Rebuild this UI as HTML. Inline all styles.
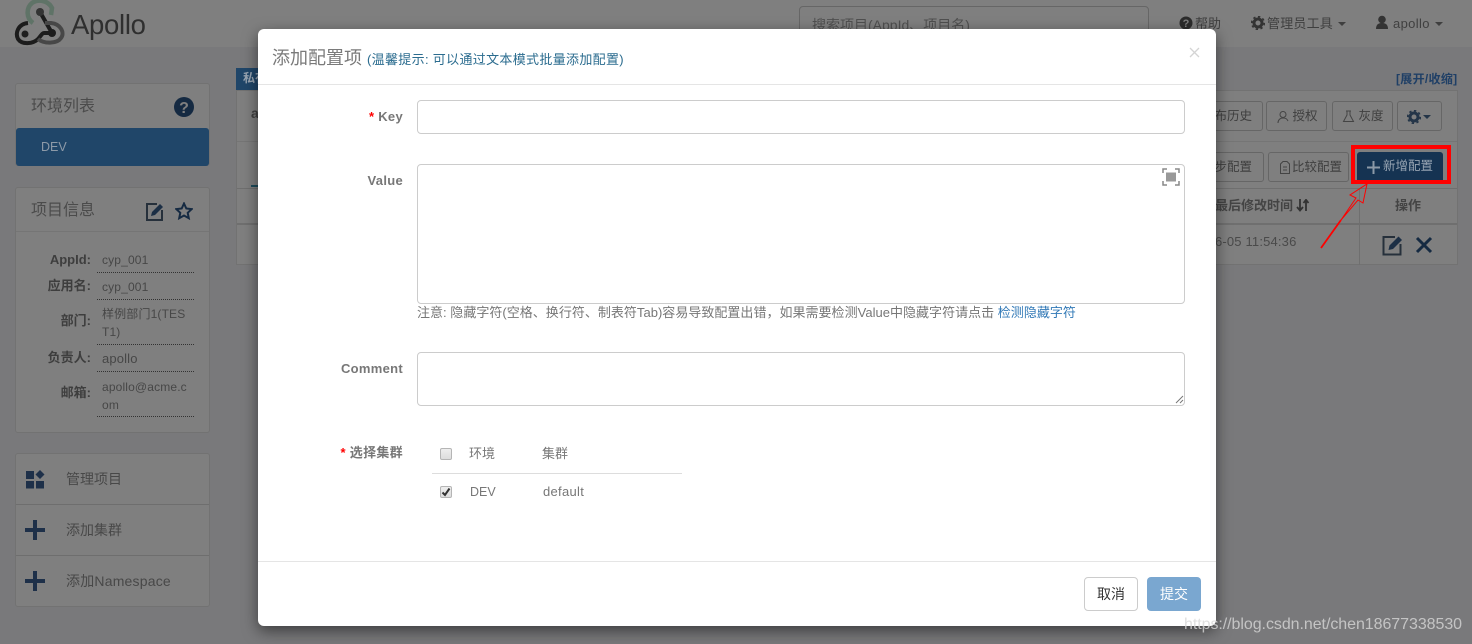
<!DOCTYPE html>
<html><head><meta charset="utf-8"><style>
html,body{margin:0;padding:0;width:1472px;height:644px;overflow:hidden;background:#79797b}
*{box-sizing:border-box}
body{font-family:"Liberation Sans","Noto Sans CJK SC",sans-serif;font-size:13px;color:#4a4a4a;position:relative}
.a{position:absolute;white-space:nowrap}
.panel{position:absolute;background:#7f7f7f;border:1px solid #727272;border-radius:3px}
.lb{position:absolute;font-weight:bold;font-size:13px;color:#3e3e3e;text-align:right;width:60px;left:31px;white-space:nowrap}
.val{position:absolute;left:97px;width:97px;font-size:12px;letter-spacing:.15px;color:#474747;border-bottom:1px dotted #333;padding:1px 0 0 5px;line-height:18px;white-space:nowrap}
.btn{position:absolute;height:30px;border:1px solid #666;border-radius:3px;background:#7f7f7f;color:#3f3f3f;font-size:12px;line-height:28px;text-align:center;white-space:nowrap}
.modal{position:absolute;left:258px;top:29px;width:958px;height:597px;background:#fff;border-radius:6px;box-shadow:0 5px 15px rgba(0,0,0,.5);overflow:hidden}
.m{position:absolute;white-space:nowrap}
.fl{position:absolute;font-weight:bold;font-size:13px;letter-spacing:.3px;color:#777;text-align:right;right:813px;white-space:nowrap}
.fl i{color:#f00;font-style:normal}
.in{position:absolute;left:159px;width:768px;border:1px solid #ccc;border-radius:4px;background:#fff}
.cb{position:absolute;left:182px;width:12px;height:12px;border:1px solid #b5b5b5;border-radius:2px;background:linear-gradient(#eee,#ddd)}
</style></head><body>
<div class="a" style="left:0;top:0;width:1472px;height:47px;background:#7f7f7f"></div>
<svg class="a" style="left:13px;top:0" width="54" height="46" viewBox="0 0 54 46" fill="none">
<path d="M20 23 C 13 18 13 8 19 3 C 25 -1 35 0 39 8 L38 15" stroke="#5f7367" stroke-width="4.500"/>
<path d="M27 12 L39 33 M15 23 C 5 24 2 33 5 39 C 9 45 20 44 25 39 C 28 36 29 33 31 33 L39 33" stroke="#1c1c1c" stroke-width="4"/>
<path d="M32 23 L38 23 C 48 24 52 33 48 38 C 44 44 31 44 25 39" stroke="#474747" stroke-width="4"/>
<circle cx="27" cy="12" r="4" fill="#333"/><circle cx="12" cy="34" r="3.500" fill="#1f1f1f"/><circle cx="39" cy="33" r="4" fill="#1c1c1c"/>
</svg>
<div class="a" style="left:71px;top:5px;font-size:27.500px;color:#2f2f2f;letter-spacing:-.3px;line-height:40px">Apollo</div>
<div class="a" style="left:799px;top:6px;width:350px;height:40px;border:1px solid #666;border-radius:4px;padding:8px 12px;font-size:14px;color:#4f4f4f">搜索项目(AppId、项目名)</div>
<svg class="a" style="left:1179px;top:16px" width="14" height="14" viewBox="0 0 14 14"><circle cx="7" cy="7" r="6.500" fill="#2c2c2c"/><text x="7" y="11" text-anchor="middle" font-size="11" font-weight="bold" fill="#7f7f7f" font-family="Liberation Sans">?</text></svg>
<div class="a" style="left:1195px;top:15px;font-size:13px;color:#3f3f3f;line-height:18px">帮助</div>
<svg class="a" style="left:1251px;top:16px" width="14" height="14" viewBox="0 0 14 14"><circle cx="7" cy="7" r="4" fill="none" stroke="#333" stroke-width="3"/><circle cx="7" cy="7" r="6.300" fill="none" stroke="#333" stroke-width="1.600" stroke-dasharray="2.400 2.500"/></svg>
<div class="a" style="left:1267px;top:15px;font-size:13px;letter-spacing:.2px;color:#3f3f3f;line-height:18px">管理员工具</div>
<div class="a" style="left:1338px;top:22px;border:4px solid transparent;border-top-color:#3f3f3f"></div>
<svg class="a" style="left:1375px;top:15px" width="14" height="15" viewBox="0 0 14 15"><circle cx="7" cy="4.500" r="3.800" fill="#333"/><path d="M1 14 C1 9 4 8 7 8 C10 8 13 9 13 14Z" fill="#333"/></svg>
<div class="a" style="left:1393px;top:15px;font-size:13px;letter-spacing:.35px;color:#404040;line-height:18px">apollo</div>
<div class="a" style="left:1435px;top:22px;border:4px solid transparent;border-top-color:#3f3f3f"></div>

<div class="panel" style="left:15px;top:83px;width:195px;height:83px"></div>
<div class="a" style="left:31px;top:96px;font-size:16px;color:#4b4b4b;line-height:22px">环境列表</div>
<svg class="a" style="left:174px;top:97px" width="20" height="20" viewBox="0 0 20 20"><circle cx="10" cy="10" r="10" fill="#152a42"/><text x="10" y="16" text-anchor="middle" font-size="16" font-weight="bold" fill="#7f7f7f" font-family="Liberation Sans">?</text></svg>
<div class="a" style="left:16px;top:128px;width:193px;height:38px;background:#204669;border-radius:3px;color:#8d9aa8;padding-left:25px;line-height:39px;font-size:12.500px">DEV</div>

<div class="panel" style="left:15px;top:187px;width:195px;height:246px"></div>
<div class="a" style="left:16px;top:231px;width:193px;height:1px;background:#757575"></div>
<div class="a" style="left:31px;top:200px;font-size:16px;color:#4b4b4b;line-height:22px">项目信息</div>
<svg class="a" style="left:145px;top:201px" width="20" height="20" viewBox="0 0 20 20" fill="none"><path d="M12 3H2v16h15V9" stroke="#26303b" stroke-width="2"/><path d="M6 15l1-4 8-8 3 3-8 8z" fill="#1c2f45"/></svg>
<svg class="a" style="left:175px;top:202px" width="18" height="18" viewBox="0 0 18 18" fill="none"><path d="M9 1.500l2.300 5 5.400.6-4 3.700 1.100 5.400L9 13.500l-4.800 2.700 1.100-5.400-4-3.700 5.400-.6z" stroke="#152a42" stroke-width="2"/></svg>
<div class="lb" style="top:252px">AppId:</div><div class="val" style="top:250px;height:23px">cyp_001</div>
<div class="lb" style="top:275px">应用名:</div><div class="val" style="top:277px;height:23px">cyp_001</div>
<div class="lb" style="top:310px">部门:</div><div class="val" style="top:304px;height:41px">样例部门1(TES<br>T1)</div>
<div class="lb" style="top:347px">负责人:</div><div class="val" style="top:349px;height:23px;font-size:13px">apollo</div>
<div class="lb" style="top:382px">邮箱:</div><div class="val" style="top:377px;height:40px">apollo@acme.c<br>om</div>

<div class="panel" style="left:15px;top:453px;width:195px;height:154px"></div>
<div class="a" style="left:16px;top:504px;width:193px;height:1px;background:#6e6e6e"></div>
<div class="a" style="left:16px;top:555px;width:193px;height:1px;background:#6e6e6e"></div>
<svg class="a" style="left:25px;top:470px" width="20" height="19" viewBox="0 0 20 19" fill="#1e3049"><rect x="1" y="1" width="8" height="8"/><rect x="1" y="11" width="8" height="7.500"/><rect x="11" y="11" width="8" height="7.500"/><path d="M15 0l4.500 4.500-4.500 4.500-4.500-4.500z"/></svg>
<div class="a" style="left:66px;top:469px;font-size:14px;color:#484848;line-height:20px">管理项目</div>
<svg class="a" style="left:25px;top:520px" width="20" height="20" fill="#1e3049"><rect y="8" width="20" height="4"/><rect x="8" width="4" height="20"/></svg>
<div class="a" style="left:66px;top:520px;font-size:14px;color:#484848;line-height:20px">添加集群</div>
<svg class="a" style="left:25px;top:571px" width="20" height="20" fill="#1e3049"><rect y="8" width="20" height="4"/><rect x="8" width="4" height="20"/></svg>
<div class="a" style="left:66px;top:571px;font-size:14px;letter-spacing:.2px;color:#484848;line-height:20px">添加Namespace</div>

<div class="a" style="left:236px;top:68px;width:22px;height:22px;background:#204669;color:#99a5b2;font-weight:bold;font-size:12px;padding-left:7px;line-height:21px;overflow:hidden">私有</div>
<div class="panel" style="left:236px;top:90px;width:1222px;height:175px;border-radius:0"></div>
<div class="a" style="left:237px;top:141px;width:1220px;height:1px;background:#757575"></div>
<div class="a" style="left:237px;top:188px;width:1220px;height:1px;background:#6f6f6f"></div>
<div class="a" style="left:237px;top:223px;width:1220px;height:2px;background:#6f6f6f"></div>
<div class="a" style="left:1359px;top:189px;width:1px;height:76px;background:#6f6f6f"></div>
<div class="a" style="left:251px;top:185px;width:8px;height:2px;background:#1e4c5c"></div>
<div class="a" style="left:251px;top:105px;font-weight:bold;font-size:14px;color:#3f3f3f">a</div>
<div class="a" style="left:1396px;top:71px;font-size:12px;font-weight:bold;letter-spacing:.3px;color:#1f3f66;line-height:16px">[展开/收缩]</div>
<div class="btn" style="left:1200px;top:101px;width:63px;text-align:right;padding-right:10px;font-size:12.500px">发布历史</div>
<div class="btn" style="left:1266px;top:101px;width:61px;padding-left:17px;font-size:12.500px">授权</div>
<svg class="a" style="left:1277px;top:110px" width="12" height="14" viewBox="0 0 12 14" fill="none" stroke="#444"><circle cx="6" cy="4.500" r="3"/><path d="M1 13c0-3 2-5 5-5s4 1 5 3"/></svg>
<div class="btn" style="left:1332px;top:101px;width:61px;padding-left:17px;font-size:12.500px">灰度</div>
<svg class="a" style="left:1342px;top:110px" width="13" height="13" viewBox="0 0 13 13" fill="none" stroke="#444"><path d="M4 1h5M5 1v4L1.500 11.500h10L8 5V1"/></svg>
<div class="btn" style="left:1397px;top:101px;width:45px"></div>
<svg class="a" style="left:1407px;top:110px" width="14" height="14" viewBox="0 0 14 14"><circle cx="7" cy="7" r="4" fill="none" stroke="#243548" stroke-width="3"/><circle cx="7" cy="7" r="6.300" fill="none" stroke="#243548" stroke-width="1.600" stroke-dasharray="2.400 2.500"/></svg>
<div class="a" style="left:1423px;top:115px;border:4px solid transparent;border-top-color:#243548"></div>
<div class="btn" style="left:1200px;top:152px;width:64px;text-align:right;padding-right:11px;font-size:12.500px">同步配置</div>
<div class="btn" style="left:1268px;top:152px;width:81px;padding-left:17px;font-size:12.500px">比较配置</div>
<svg class="a" style="left:1280px;top:161px" width="10" height="13" viewBox="0 0 10 13" fill="none" stroke="#444"><path d="M3 .5h4l2.500 2.500v9.500H.5V3z"/><path d="M3 6h4M3 9h4"/></svg>

<div class="a" style="left:1351px;top:145px;width:100px;height:39px;border:4px solid #f00"></div>
<div class="a" style="left:1357px;top:152px;width:86px;height:28px;background:#153352;border-radius:3px 3px 0 0;color:#97a4b2;font-size:12.500px;line-height:29px;padding-left:26px">新增配置</div>
<svg class="a" style="left:1367px;top:161px" width="13" height="13" fill="#8c99a7"><rect y="5.500" width="13" height="2"/><rect x="5.500" width="2" height="13"/></svg>
<svg class="a" style="left:1315px;top:180px" width="56" height="72" viewBox="0 0 56 72" fill="none"><path d="M6 68L26 40" stroke="#f00" stroke-width="1.800"/><path d="M26 40L41 18L35 15L52 4L48 23L43 20L26 40" stroke="#f00" stroke-width="1"/></svg>

<div class="a" style="left:1215px;top:197px;font-weight:bold;font-size:13px;color:#444;line-height:18px">最后修改时间</div>
<svg class="a" style="left:1296px;top:199px" width="14" height="13" fill="none" stroke="#333" stroke-width="1.800"><path d="M4 0v11M1 8l3 3.500L7 8M10 12V1M7.500 4L10 .8 12.500 4"/></svg>
<div class="a" style="left:1395px;top:197px;font-weight:bold;font-size:13px;color:#444;line-height:18px">操作</div>
<div class="a" style="left:1215px;top:233px;font-size:13px;letter-spacing:.17px;color:#4a4a4a;line-height:18px">6-05 11:54:36</div>
<svg class="a" style="left:1382px;top:234px" width="22" height="22" viewBox="0 0 22 22" fill="none"><path d="M13 3H1.500v17.500h17V10" stroke="#26303b" stroke-width="2"/><path d="M6.500 16l1-4.500 9-9 3.500 3.500-9 9z" fill="#1c2f45"/></svg>
<svg class="a" style="left:1415px;top:236px" width="18" height="18" viewBox="0 0 18 18"><path d="M2 2l14 14M16 2L2 16" stroke="#152a42" stroke-width="3"/></svg>

<div class="modal">
<div class="m" style="left:14px;top:17px;font-size:18px;color:#7a7a7a;line-height:25px">添加配置项 <span style="font-size:13px;letter-spacing:.32px;color:#2b6c8f">(温馨提示: 可以通过文本模式批量添加配置)</span></div>
<svg class="m" style="left:931px;top:18px" width="11" height="11" stroke="#d4d4d4" stroke-width="1.300"><path d="M1 1l9 9M10 1l-9 9"/></svg>
<div class="m" style="left:0;top:55px;width:958px;height:1px;background:#e5e5e5"></div>

<div class="fl" style="top:80px"><i>*</i> Key</div>
<div class="in" style="top:71px;height:34px"></div>
<div class="fl" style="top:144px">Value</div>
<div class="in" style="top:135px;height:140px"></div>
<svg class="m" style="left:904px;top:139px" width="18" height="18" viewBox="0 0 18 18" fill="none" stroke="#888" stroke-width="1.500"><path d="M1 5V1h4M13 1h4v4M17 13v4h-4M5 17H1v-4"/><rect x="4" y="4.500" width="10" height="9" fill="#999" stroke="none"/></svg>
<div class="m" style="left:159px;top:275px;font-size:13px;letter-spacing:.02px;color:#777;line-height:18px">注意: 隐藏字符(空格、换行符、制表符Tab)容易导致配置出错，如果需要检测Value中隐藏字符请点击 <span style="color:#337ab7">检测隐藏字符</span></div>
<div class="fl" style="top:332px">Comment</div>
<div class="in" style="top:323px;height:54px"></div>
<svg class="m" style="left:917px;top:366px" width="9" height="9" stroke="#777"><path d="M1 8L8 1M5 8l3-3"/></svg>
<div class="fl" style="top:413px"><i>*</i> 选择集群</div>
<div class="cb" style="top:419px"></div>
<div class="m" style="left:211px;top:416px;font-size:13px;color:#777;line-height:18px">环境</div>
<div class="m" style="left:284px;top:416px;font-size:13px;color:#777;line-height:18px">集群</div>
<div class="m" style="left:174px;top:444px;width:250px;height:1px;background:#ddd"></div>
<div class="cb" style="top:457px"></div>
<svg class="m" style="left:183px;top:458px" width="10" height="10" fill="none" stroke="#333" stroke-width="2"><path d="M1.500 5.500L4 8l4.500-6.500"/></svg>
<div class="m" style="left:212px;top:454px;font-size:12.500px;color:#777;line-height:18px">DEV</div>
<div class="m" style="left:285px;top:454px;font-size:13px;letter-spacing:.3px;color:#777;line-height:18px">default</div>
<div class="m" style="left:0;top:532px;width:958px;height:1px;background:#e5e5e5"></div>
<div class="m" style="left:826px;top:548px;width:54px;height:34px;border:1px solid #ccc;border-radius:4px;text-align:center;line-height:32px;font-size:14px;color:#333">取消</div>
<div class="m" style="left:889px;top:548px;width:54px;height:34px;background:#7aa7d0;border-radius:4px;text-align:center;line-height:34px;font-size:14px;color:#fff">提交</div>
</div>
<div class="a" style="left:1184px;top:615px;font-size:16px;color:rgba(215,215,215,.8);line-height:20px;letter-spacing:-.06px">https://blog.csdn.net/chen18677338530</div>
</body></html>
